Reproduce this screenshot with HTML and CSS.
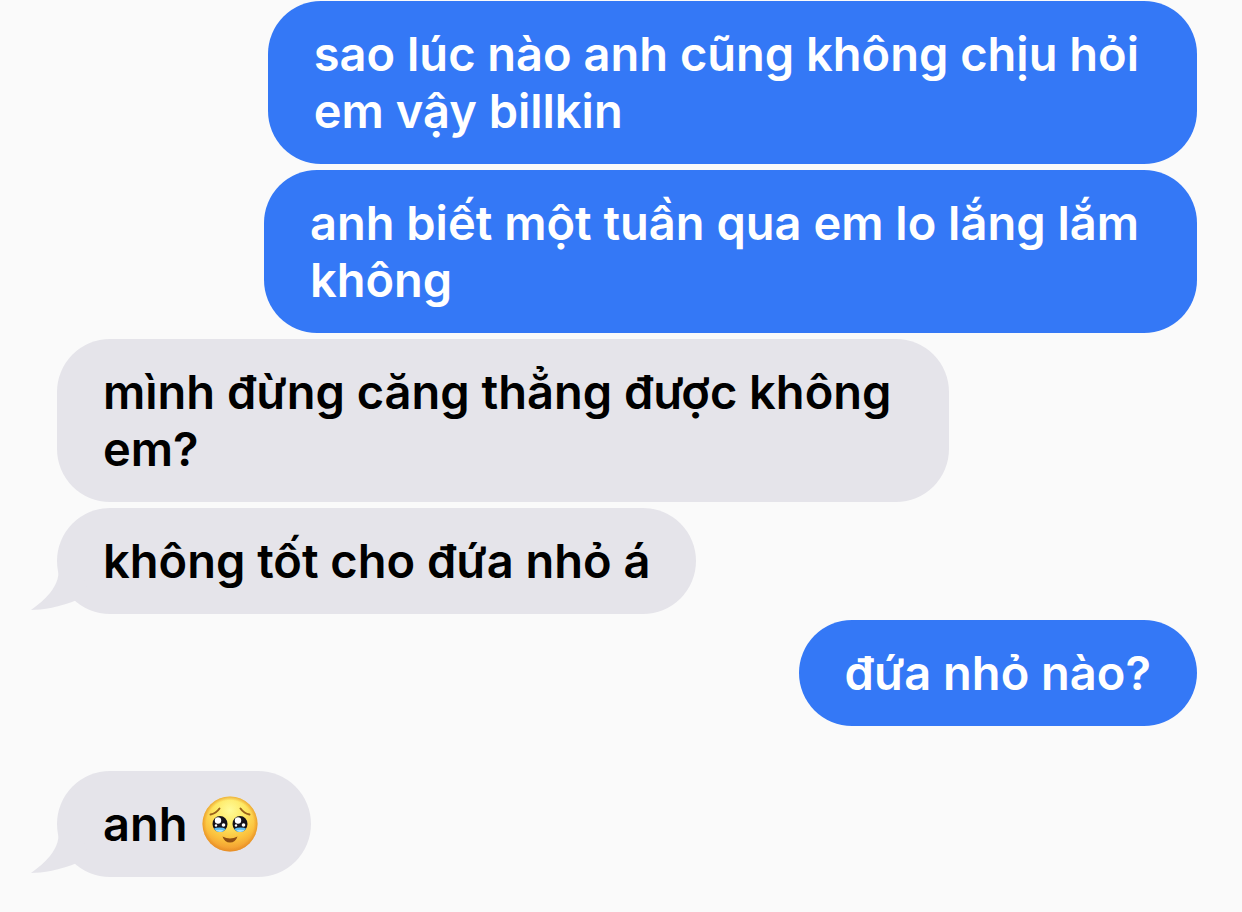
FILE: index.html
```html
<!DOCTYPE html>
<html lang="vi">
<head>
    <meta charset="UTF-8">
    <meta name="viewport" content="width=device-width, initial-scale=1.0">
    <title>Messages</title>
    <link rel="stylesheet" href="styles.css">
</head>
<body>
    <main class="chat">
        <p class="bubble sent multiline">sao lúc nào anh cũng không chịu hỏi<br>em vậy billkin</p>
        <p class="bubble sent multiline">anh biết một tuần qua em lo lắng lắm<br>không</p>
        <p class="bubble received multiline">mình đừng căng thẳng được không<br>em?</p>
        <p class="bubble received">
            không tốt cho đứa nhỏ á
            <svg class="tail" viewBox="0 0 60 50" aria-hidden="true">
                <path d="M29 0 C31 12 28 20 21 29 C16 35 9 41 2 46 C13 46 31 43 48 36 L60 20 Z"/>
            </svg>
        </p>
        <p class="bubble sent">đứa nhỏ nào?</p>
        <p class="bubble received last">
            anh
            <svg class="emoji" viewBox="0 0 56 56" role="img" aria-label="Face holding back tears">
                <defs>
                    <radialGradient id="face" cx="50%" cy="25%" r="78%">
                        <stop offset="0" stop-color="#fffb9a"/>
                        <stop offset="0.35" stop-color="#fee862"/>
                        <stop offset="0.7" stop-color="#fbbf3c"/>
                        <stop offset="1" stop-color="#ee8e2c"/>
                    </radialGradient>
                    <radialGradient id="rim" cx="50%" cy="50%" r="50%">
                        <stop offset="0.86" stop-color="#e88b20" stop-opacity="0"/>
                        <stop offset="1" stop-color="#e08a20" stop-opacity="0.6"/>
                    </radialGradient>
                    <clipPath id="eyes">
                        <ellipse cx="18" cy="28" rx="7.5" ry="8"/>
                        <ellipse cx="38" cy="28" rx="7.5" ry="8"/>
                    </clipPath>
                </defs>
                <circle cx="28" cy="28" r="27.5" fill="url(#face)"/>
                <circle cx="28" cy="28" r="27.5" fill="url(#rim)"/>
                <!-- brows -->
                <path d="M8.5 18.5 Q14 17.5 17.5 12.5 M47.5 18.5 Q42 17.5 38.5 12.5" fill="none" stroke="#98601a" stroke-width="2" stroke-linecap="round"/>
                <!-- eyes with tears along the lower lid -->
                <g clip-path="url(#eyes)">
                    <rect x="10" y="19" width="36" height="18" fill="#15131b"/>
                    <ellipse cx="17.5" cy="36.5" rx="9" ry="5" fill="#5bbcf2"/>
                    <ellipse cx="38.5" cy="36.5" rx="9" ry="5" fill="#5bbcf2"/>
                    <ellipse cx="17.5" cy="35" rx="4" ry="1.2" fill="#a9e2fb"/>
                    <ellipse cx="38.5" cy="35" rx="4" ry="1.2" fill="#a9e2fb"/>
                </g>
                <g fill="#fff">
                    <circle cx="16" cy="24.5" r="3.2"/>
                    <circle cx="36" cy="24.5" r="3.2"/>
                    <circle cx="21.5" cy="29" r="1.8"/>
                    <circle cx="41.5" cy="29" r="1.8"/>
                    <circle cx="14" cy="29.5" r="1.2"/>
                    <circle cx="34" cy="29.5" r="1.2"/>
                </g>
                <path d="M20.5 40.5 Q28 44.5 35.5 40.5 Q33.5 46.5 28 46.5 Q22.5 46.5 20.5 40.5 Z" fill="#8f4d12"/>
            </svg>
            <svg class="tail" viewBox="0 0 60 50" aria-hidden="true">
                <path d="M29 0 C31 12 28 20 21 29 C16 35 9 41 2 46 C13 46 31 43 48 36 L60 20 Z"/>
            </svg>
        </p>
    </main>
</body>
</html>
```

FILE: styles.css
```css
body {
    margin: 0;
    background-color: #fafafa;
    font-family: Inter, "Noto Sans", sans-serif;
}

.chat {
    display: flex;
    flex-direction: column;
    align-items: flex-start;
    gap: 6px;
    padding: 1px 45px 35px 57px;
}

.bubble {
    position: relative;
    margin: 0;
    padding: 24px 46px 25px;
    border-radius: 53px;
    font-size: 47px;
    font-weight: 600;
    line-height: 57px;
}

.multiline {
    padding-right: 58px;
}

.sent {
    align-self: flex-end;
    background-color: #3478f6;
    color: #fff;
}

.received {
    background-color: #e5e4ea;
    color: #000;
}

.last {
    margin-top: 39px;
}

.tail {
    position: absolute;
    left: -28px;
    bottom: 0;
    width: 60px;
    height: 50px;
    fill: #e5e4ea;
}

.emoji {
    width: 56px;
    height: 56px;
    margin: 0 7px 0 3px;
    vertical-align: -11px;
}
```
